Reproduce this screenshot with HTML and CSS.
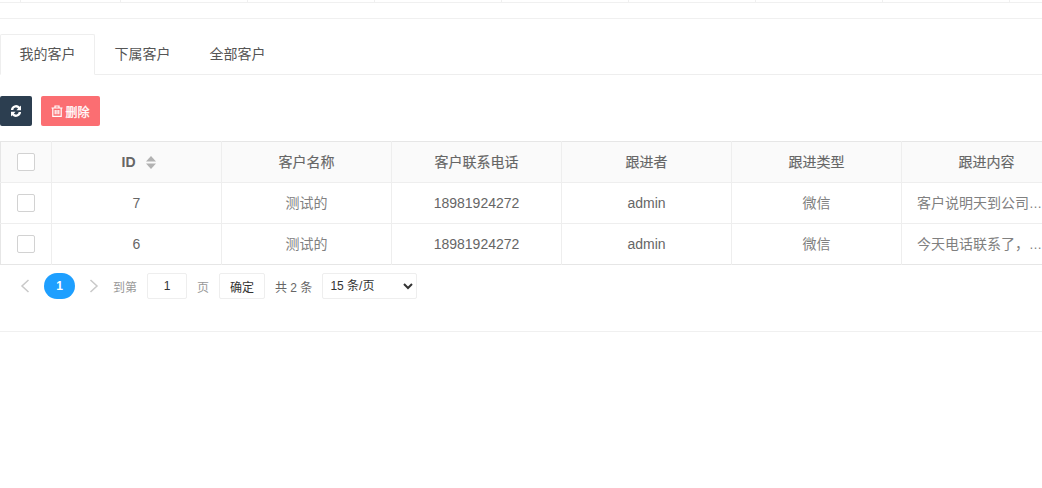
FILE: index.html
```html
<!DOCTYPE html>
<html lang="zh-CN">
<head>
<meta charset="utf-8">
<title>客户跟进</title>
<link rel="stylesheet" href="styles.css">
</head>
<body>
<div class="top-strip">
  <span class="strip-cell first"></span><span class="strip-cell second"></span>
  <span class="strip-cell"></span><span class="strip-cell"></span><span class="strip-cell"></span><span class="strip-cell"></span><span class="strip-cell"></span><span class="strip-cell"></span><span class="strip-cell"></span>
</div>
<div class="panel">
  <ul class="tabs">
    <li class="tab active">我的客户</li>
    <li class="tab">下属客户</li>
    <li class="tab">全部客户</li>
  </ul>
  <div class="toolbar">
    <button class="btn btn-dark" type="button" aria-label="刷新">
      <svg class="icon-refresh" viewBox="0 0 12 12" width="12" height="12"><path d="M11 .6v4.6H6.400l1.700-1.700A2.700 2.700 0 0 0 3.300 4.900H.9A5.100 5.100 0 0 1 9.800 1.800zM1 11.400V6.800h4.600L3.900 8.500a2.700 2.700 0 0 0 4.800-1.400h2.400a5.100 5.100 0 0 1-8.900 3.100z" fill="#fff"/></svg>
    </button>
    <button class="btn btn-danger" type="button">
      <svg class="icon-trash" viewBox="0 0 12 12" width="12" height="12"><path d="M.5 3h11M4 2.800V1h4v1.800M1.800 3v8.300h8.400V3M4.200 5v4.300M6 5v4.300M7.800 5v4.300" fill="none" stroke="#fff" stroke-width="1.200"/></svg>
      <span class="btn-label">删除</span>
    </button>
  </div>
  <div class="table-wrap">
    <table class="data-table">
      <thead>
        <tr>
          <th class="col-check"><span class="checkbox"></span></th>
          <th class="col"><span class="id-head">ID<svg class="sort" viewBox="0 0 10 13" width="10" height="13"><path d="M5 0l5 5.500H0z" fill="#b2b2b2"/><path d="M5 13L0 7.500h10z" fill="#b2b2b2"/></svg></span></th>
          <th class="col">客户名称</th>
          <th class="col">客户联系电话</th>
          <th class="col">跟进者</th>
          <th class="col">跟进类型</th>
          <th class="col">跟进内容</th>
        </tr>
      </thead>
      <tbody>
        <tr>
          <td><span class="checkbox"></span></td>
          <td>7</td><td class="cjk">测试的</td><td>18981924272</td><td>admin</td><td class="cjk">微信</td>
          <td class="cjk"><div class="clip">客户说明天到公司<span class="more">…</span></div></td>
        </tr>
        <tr>
          <td><span class="checkbox"></span></td>
          <td>6</td><td class="cjk">测试的</td><td>18981924272</td><td>admin</td><td class="cjk">微信</td>
          <td class="cjk"><div class="clip">今天电话联系了，<span class="more">…</span></div></td>
        </tr>
      </tbody>
    </table>
  </div>
  <div class="pager">
    <svg class="arrow" viewBox="0 0 10 14" width="10" height="14"><path d="M8.500 1L2 7l6.500 6" fill="none" stroke="#c9c9c9" stroke-width="1.500"/></svg>
    <span class="page-num">1</span>
    <svg class="arrow" viewBox="0 0 10 14" width="10" height="14"><path d="M1.500 1L8 7l-6.500 6" fill="none" stroke="#c9c9c9" stroke-width="1.500"/></svg>
    <span class="muted goto">到第</span>
    <input class="page-input" type="text" value="1" aria-label="页码">
    <span class="muted">页</span>
    <button class="confirm" type="button">确定</button>
    <span class="total">共 2 条</span>
    <select class="size-select" aria-label="每页条数"><option>15 条/页</option></select>
  </div>
</div>
</body>
</html>
```

FILE: styles.css
```css
* { box-sizing: border-box; }
html, body { margin: 0; padding: 0; background: #fff; overflow: hidden; }
body {
  width: 1042px;
  height: 488px;
  font-family: "Liberation Sans", "Noto Sans CJK SC", sans-serif;
  font-size: 14px;
  color: #666;
}
.top-strip {
  display: flex;
  height: 3px;
  border-bottom: 1px solid #f0f0f0;
  margin-bottom: 15px;
}
.strip-cell {
  flex: 0 0 127px;
  height: 2px;
  border-right: 1px solid #f0f0f0;
}
.strip-cell.first { flex-basis: 21px; }
.strip-cell.second { flex-basis: 100px; }
.panel {
  height: 314px;
  padding-top: 15px;
  border-top: 1px solid #f0f0f0;
  border-bottom: 1px solid #f0f0f0;
  overflow: hidden;
}
.tabs {
  display: flex;
  list-style: none;
  margin: 0;
  padding: 0;
  height: 41px;
  border-bottom: 1px solid #eee;
}
.tab {
  width: 95px;
  height: 41px;
  line-height: 40px;
  text-align: center;
  color: #555;
  font-size: 14px;
}
.tab.active {
  background: #fff;
  border: 1px solid #eee;
  border-bottom-color: #fff;
  border-radius: 2px 2px 0 0;
  line-height: 38px;
}
.toolbar {
  display: flex;
  gap: 9px;
  margin-top: 21px;
  height: 30px;
}
.btn {
  display: flex;
  align-items: center;
  justify-content: center;
  height: 30px;
  border: 0;
  border-radius: 2px;
  padding: 0;
  color: #fff;
  font: 12px "Liberation Sans", "Noto Sans CJK SC", sans-serif;
}
.btn-label { -webkit-text-stroke: 0.3px #fff; }
.btn-dark { width: 32px; background: #2c3e50; }
.btn-danger { width: 59px; gap: 2px; background: #fb6e72; }
.table-wrap {
  width: 1042px;
  margin-top: 15px;
  overflow: hidden;
}
.data-table {
  width: 1072px;
  table-layout: fixed;
  border-collapse: collapse;
  border-top: 1px solid #e6e6e6;
  border-bottom: 1px solid #e6e6e6;
  border-left: 1px solid #e6e6e6;
}
.col-check { width: 51px; }
.col { width: 170px; }
.data-table th, .data-table td {
  height: 41px;
  padding: 0 15px;
  text-align: center;
  border-right: 1px solid #eee;
  border-bottom: 1px solid #eee;
  font-size: 14px;
  line-height: 20px;
}
.data-table tbody tr:last-child td { border-bottom: 0; }
.data-table th {
  background: #fafafa;
  font-weight: 400;
  color: #666;
  -webkit-text-stroke: 0.15px #666;
}
.data-table td.cjk { color: #808080; }
.data-table th:first-child, .data-table td:first-child { padding: 0; }
.id-head {
  display: inline-flex;
  align-items: center;
  gap: 10px;
  padding-left: 4px;
  font-weight: 700;
  -webkit-text-stroke: 0;
}
.sort { display: block; }
.checkbox {
  display: block;
  width: 18px;
  height: 18px;
  margin: 0 auto;
  background: #fff;
  border: 1px solid #d2d2d2;
  border-radius: 2px;
}
.clip {
  width: 125px;
  white-space: nowrap;
  overflow: hidden;
  text-align: left;
}
.more { font-size: 13px; }
.pager {
  display: flex;
  align-items: center;
  height: 26px;
  margin-top: 8px;
  padding-left: 20px;
  font-size: 12px;
}
.arrow { display: block; }
.page-num {
  width: 31px;
  height: 26px;
  margin-left: 14px;
  margin-right: 14px;
  border-radius: 13px;
  background: #1e9fff;
  color: #fff;
  line-height: 26px;
  text-align: center;
  font-weight: 700;
}
.muted { color: #999; }
.goto { margin-left: 14px; }
.page-input {
  width: 40px;
  height: 26px;
  margin: 0 10px;
  border: 1px solid #eee;
  border-radius: 2px;
  padding: 0;
  text-align: center;
  font: 12px "Liberation Sans", "Noto Sans CJK SC", sans-serif;
  color: #333;
}
.confirm {
  width: 46px;
  height: 26px;
  margin-left: 10px;
  background: #fff;
  border: 1px solid #eee;
  border-radius: 2px;
  padding: 0;
  font: 12px "Liberation Sans", "Noto Sans CJK SC", sans-serif;
  color: #333;
}
.total { margin-left: 10px; color: #666; }
.size-select {
  width: 95px;
  height: 26px;
  margin-left: 10px;
  background: #fff;
  border: 1px solid #eee;
  border-radius: 2px;
  padding: 0 0 0 3px;
  font: 12px "Liberation Sans", "Noto Sans CJK SC", sans-serif;
  color: #333;
}
```
